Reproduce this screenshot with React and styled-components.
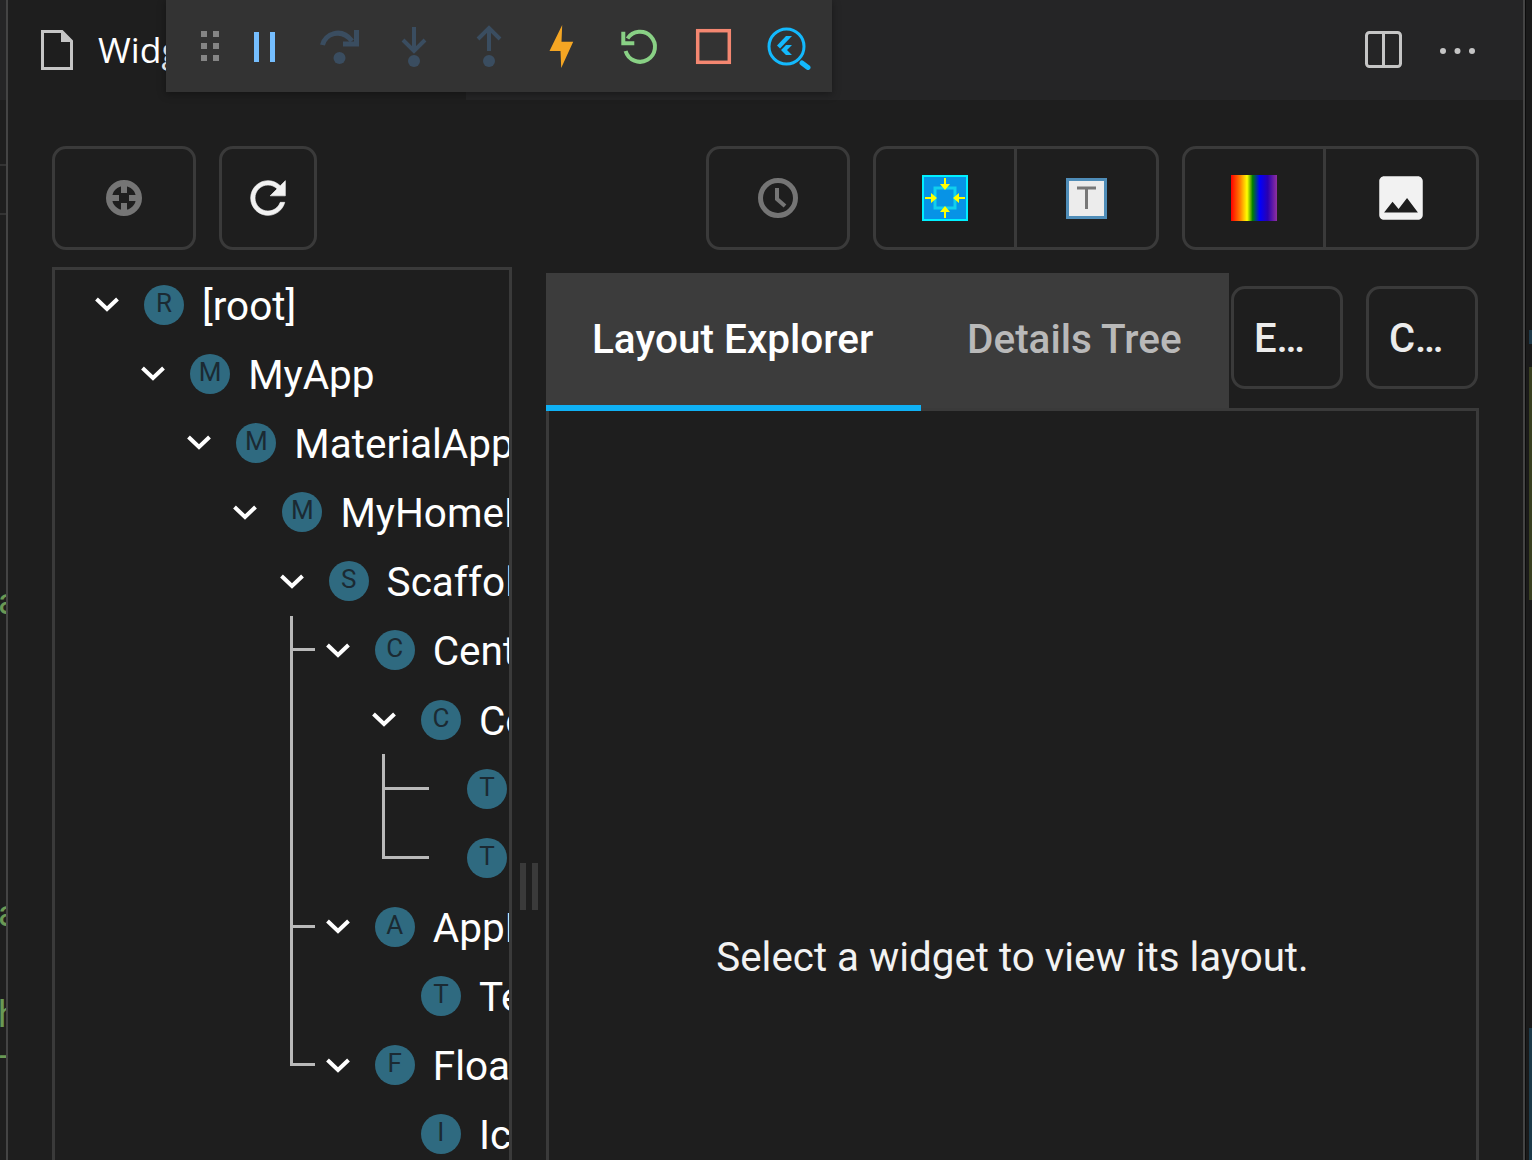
import React from "react"
import styled, { createGlobalStyle } from "styled-components"

const GlobalStyle = createGlobalStyle`
  html, body {
    margin: 0;
    background: #1e1e1e;
  }
`

const Page = styled.div`
  display: flex;
  width: 1532px;
  height: 1160px;
  overflow: hidden;
  background: #1e1e1e;
  font-family: Roboto, "Liberation Sans", sans-serif;
  color: #fff;
`

const Gutter = styled.div`
  flex: none;
  width: 6px;
  border-right: 2px solid #444;
  display: flex;
  flex-direction: column;
  overflow: hidden;
`

const GutterHead = styled.div`
  flex: none;
  height: 100px;
  background: #252526;
`

const GutterRule = styled.div`
  flex: none;
  height: 2px;
  margin-top: ${p => p.$top}px;
  background: #333;
`

const GutterLine = styled.div`
  flex: none;
  margin-top: ${p => p.$top}px;
  margin-left: ${p => p.$shift || 0}px;
  height: 40px;
  font: 36px/40px Roboto, sans-serif;
  color: #6a9955;
  white-space: nowrap;
`

const Main = styled.div`
  flex: none;
  width: 1515px;
  display: flex;
  flex-direction: column;
  position: relative;
`

const RightEdge = styled.div`
  flex: 1;
  border-left: 2px solid #444;
  display: flex;
`

const EdgeShadow = styled.div`
  flex: none;
  width: 1px;
  background: #0c0c0c;
`

const OverviewRuler = styled.div`
  flex: 1;
  padding-top: 330px;
  background: #1a1a1a;
  display: flex;
  flex-direction: column;
  align-items: flex-end;
`

const RulerMark = styled.div`
  flex: none;
  width: 3px;
  height: ${p => p.$height}px;
  margin-top: ${p => p.$top}px;
  background: ${p => p.$color};
`

const Header = styled.div`
  flex: none;
  height: 100px;
  display: flex;
  align-items: stretch;
  background: #252526;
`

const EditorTab = styled.div`
  flex: none;
  width: 425px;
  padding-left: 33px;
  display: flex;
  align-items: center;
  gap: 25px;
  background: #1e1e1e;
  font: 35.5px "Open Sans", sans-serif;
  white-space: nowrap;
`

const TabTitle = styled.span`
  padding-bottom: 2px;
`

const HeaderActions = styled.div`
  flex: 1;
  display: flex;
  align-items: center;
  justify-content: flex-end;
  gap: 37px;
  padding-right: 48px;
`

const DebugBar = styled.div`
  position: absolute;
  top: 0;
  left: 158px;
  width: 666px;
  height: 92px;
  display: flex;
  align-items: center;
  background: #333333;
  box-shadow: 0 2px 8px rgba(0, 0, 0, 0.36);
`

const DragHandle = styled.div`
  flex: none;
  width: 26px;
  padding-left: 35px;
  display: flex;
`

const DebugButton = styled.div`
  flex: none;
  width: 75px;
  display: flex;
  justify-content: center;
`

const Toolbar = styled.div`
  flex: none;
  height: 104px;
  margin-top: 46px;
  padding: 0 44px;
  display: flex;
  gap: 23px;
`

const Spacer = styled.div`
  flex: 1;
`

const ButtonGroup = styled.div`
  flex: none;
  display: flex;
  box-sizing: border-box;
  border: 3px solid #3a3a3a;
  border-radius: 14px;
`

const ToolButton = styled.div`
  flex: none;
  box-sizing: border-box;
  width: ${p => p.$width}px;
  display: flex;
  align-items: center;
  justify-content: center;

  & + & {
    border-left: 3px solid #3a3a3a;
  }
`

const Split = styled.div`
  flex: none;
  height: 1239px;
  margin-top: 17px;
  padding: 0 44px;
  display: flex;
`

const TreePanel = styled.div`
  flex: none;
  box-sizing: border-box;
  width: 460px;
  height: 100%;
  border: 3px solid #3a3a3a;
  overflow: hidden;
`

const Row = styled.div`
  position: relative;
  height: 69.17px;
  padding-left: ${p => 37 + p.$depth * 46.15}px;
  display: flex;
  align-items: center;
  white-space: nowrap;
`

const Chevron = styled.div`
  flex: none;
  width: 30px;
  margin-right: 22px;
  display: flex;
  justify-content: center;
  visibility: ${p => (p.$hidden ? "hidden" : "visible")};
`

const Avatar = styled.div`
  flex: none;
  box-sizing: border-box;
  width: 40px;
  height: 40px;
  margin-right: 18px;
  padding-bottom: 4px;
  border-radius: 50%;
  background: #2f6a80;
  color: #1b2a33;
  font-size: 26px;
  display: flex;
  align-items: center;
  justify-content: center;
`

const Label = styled.span`
  font-size: 40.5px;
  line-height: 50px;
  padding-top: 2px;
`

const GuideStem = styled.div`
  position: absolute;
  left: ${p => p.$left}px;
  top: 0;
  width: 3px;
  height: ${p => (p.$end ? "50%" : "100%")};
  background: #b9b9b9;
`

const GuideArm = styled.div`
  position: absolute;
  left: ${p => p.$left}px;
  top: calc(50% - 2px);
  width: ${p => p.$width}px;
  height: 3px;
  background: #b9b9b9;
`

const Splitter = styled.div`
  flex: none;
  width: 34px;
  display: flex;
  align-items: center;
  justify-content: center;
  gap: 6px;
`

const Grip = styled.div`
  width: 6px;
  height: 47px;
  background: #3a3a3a;
`

const DetailPane = styled.div`
  flex: 1;
  min-width: 0;
  padding-top: 6px;
  display: flex;
  flex-direction: column;
`

const TabRow = styled.div`
  flex: none;
  height: 135px;
  display: flex;
`

const TabStrip = styled.div`
  flex: none;
  width: 683px;
  display: flex;
  align-items: flex-start;
  background: #3c3c3c;
`

const Tab = styled.div`
  position: relative;
  z-index: 1;
  flex: none;
  box-sizing: border-box;
  width: ${p => p.$width}px;
  height: 138px;
  padding-left: 46px;
  padding-top: 42px;
  border-bottom: 6px solid ${p => (p.$active ? "#0fb1f5" : "transparent")};
  color: ${p => (p.$active ? "#fff" : "#b9b9b9")};
  font-size: 40.5px;
  line-height: 48px;
  font-weight: 500;
  white-space: nowrap;
`

const TextButton = styled.div`
  flex: none;
  box-sizing: border-box;
  width: ${p => p.$width}px;
  height: 103px;
  margin-top: 13px;
  margin-left: ${p => p.$gap}px;
  padding-left: 20px;
  padding-top: 2px;
  border: 3px solid #3a3a3a;
  border-radius: 14px;
  display: flex;
  align-items: center;
  color: #ececec;
  font-size: 40px;
  font-weight: 500;
`

const LayoutPanel = styled.div`
  flex: 1;
  border: 3px solid #3a3a3a;
  display: flex;
  align-items: center;
  justify-content: center;
  font-size: 40.3px;
  color: #f2f2f2;
`

const FileSvg = styled.svg`
  flex: none;
`

const SplitSvg = styled.svg`
  margin-bottom: 2px;
`

const MoreSvg = styled.svg`
  margin-top: 2px;
`

const tree = [
  { depth: 0, letter: "R", label: "[root]", open: true },
  { depth: 1, letter: "M", label: "MyApp", open: true },
  { depth: 2, letter: "M", label: "MaterialApp", open: true },
  { depth: 3, letter: "M", label: "MyHomePage", open: true },
  { depth: 4, letter: "S", label: "Scaffold", open: true },
  { depth: 5, letter: "C", label: "Center", open: true, stem: true, arm: 25 },
  { depth: 6, letter: "C", label: "Column", open: true, stem: true },
  { depth: 7, letter: "T", label: "Text", stem: true, stem2: 327, arm2: 47 },
  { depth: 7, letter: "T", label: "Text", stem: true, stem2: 327, arm2: 47, end2: true },
  { depth: 5, letter: "A", label: "AppBar", open: true, stem: true, arm: 25 },
  { depth: 6, letter: "T", label: "Text", stem: true },
  { depth: 5, letter: "F", label: "FloatingActionButton", open: true, stem: true, arm: 25, end: true },
  { depth: 6, letter: "I", label: "Icon" },
]

const Icon48 = ({ children }) => (
  <svg width="48" height="48" viewBox="0 0 48 48" fill="none">{children}</svg>
)

const DragDots = () => (
  <svg width="18" height="30" viewBox="0 0 18 30" fill="#858585">
    <rect x="0" y="0" width="6" height="6" />
    <rect x="12" y="0" width="6" height="6" />
    <rect x="0" y="12" width="6" height="6" />
    <rect x="12" y="12" width="6" height="6" />
    <rect x="0" y="24" width="6" height="6" />
    <rect x="12" y="24" width="6" height="6" />
  </svg>
)

const FileIcon = () => (
  <FileSvg width="32" height="40" viewBox="0 0 32 40" fill="none" stroke="#c5c5c5" strokeWidth="3">
    <path d="M1.5 1.5H21L30.5 11V38.5H1.5Z" />
    <path d="M20 1.5V12H30.5" fill="#c5c5c5" stroke="none" />
  </FileSvg>
)

const SplitIcon = () => (
  <SplitSvg width="37" height="37" viewBox="0 0 37 37" fill="none" stroke="#c5c5c5" strokeWidth="3">
    <rect x="1.5" y="1.5" width="34" height="34" rx="3" />
    <path d="M18.5 1.5V35.5" />
  </SplitSvg>
)

const MoreIcon = () => (
  <MoreSvg width="36" height="8" viewBox="0 0 36 8" fill="#c5c5c5">
    <circle cx="4" cy="4" r="3" />
    <circle cx="18.5" cy="4" r="3" />
    <circle cx="33" cy="4" r="3" />
  </MoreSvg>
)

const StepColor = "#3a4d60"

const debugIcons = [
  <Icon48 key="pause">
    <rect x="13" y="10" width="5" height="30" fill="#75beff" />
    <rect x="29" y="10" width="5" height="30" fill="#75beff" />
  </Icon48>,
  <Icon48 key="over">
    <path d="M6.5 23C9 12 25 5 36 19" stroke={StepColor} strokeWidth="5" />
    <path d="M40.5 8V22H27" stroke={StepColor} strokeWidth="5" />
    <circle cx="23.5" cy="36" r="6" fill={StepColor} />
  </Icon48>,
  <Icon48 key="into">
    <path d="M23 5V27M12 18L23 29L34 18" stroke={StepColor} strokeWidth="4" />
    <circle cx="23" cy="39" r="6" fill={StepColor} />
  </Icon48>,
  <Icon48 key="out">
    <path d="M23 29V7M12 17L23 6L34 17" stroke={StepColor} strokeWidth="4" />
    <circle cx="23" cy="39" r="6" fill={StepColor} />
  </Icon48>,
  <Icon48 key="bolt">
    <path d="M21.2 3L8.5 29H19.5L20.2 46L32.2 19.7H20.5Z" fill="#f5a623" />
  </Icon48>,
  <Icon48 key="restart">
    <path d="M9.6 29A15 15 0 1 0 11.5 16.5" stroke="#89d185" strokeWidth="4" />
    <path d="M7.3 9.7V21.3H18.3" stroke="#89d185" strokeWidth="4" />
  </Icon48>,
  <Icon48 key="stop">
    <rect x="6.7" y="8.7" width="31.6" height="31.6" stroke="#f48771" strokeWidth="3.5" />
  </Icon48>,
  <Icon48 key="inspect">
    <circle cx="20.5" cy="24.5" r="17.5" stroke="#13b9fd" strokeWidth="3" />
    <path d="M36 41L42 45.5" stroke="#13b9fd" strokeWidth="5" strokeLinecap="round" />
    <path d="M26 14H20L11 23.5L14 26.5Z" fill="#13b9fd" />
    <path d="M26 23H20L15 28L20 33H26L21 28Z" fill="#13b9fd" />
  </Icon48>,
]

const Material = ({ d, fill, size = 46, stroke = 0 }) => (
  <svg width={size} height={size} viewBox="0 0 24 24" fill={fill} stroke={fill} strokeWidth={stroke}><path d={d} /></svg>
)

const TargetIcon = () => (
  <svg width="36" height="36" viewBox="0 0 36 36" fill="none" stroke="#757575">
    <circle cx="18" cy="18" r="15" strokeWidth="6" />
    <path d="M18 5V13M18 23V31M5 18H13M23 18H31" strokeWidth="6" />
  </svg>
)

const ClockIcon = () => (
  <svg width="40" height="40" viewBox="0 0 40 40" fill="none" stroke="#757575">
    <circle cx="20" cy="20" r="17.5" strokeWidth="5" />
    <path d="M19 10V21L27 28" strokeWidth="4" />
  </svg>
)

const RefreshPath = "M17.65 6.35C16.2 4.9 14.21 4 12 4c-4.42 0-7.99 3.58-7.99 8s3.57 8 7.99 8c3.73 0 6.84-2.55 7.73-6h-2.08c-.82 2.33-3.04 4-5.65 4-3.31 0-6-2.69-6-6s2.69-6 6-6c1.66 0 3.14.69 4.22 1.78L13 11h7V4l-2.35 2.35z"
const ImagePath = "M21 19V5c0-1.1-.9-2-2-2H5c-1.1 0-2 .9-2 2v14c0 1.1.9 2 2 2h14c1.1 0 2-.9 2-2zM8.5 13.5l2.5 3.01L14.5 12l4.5 6H5l3.5-4.5z"

const RepaintIcon = () => (
  <svg width="46" height="46" viewBox="0 0 46 46">
    <rect x="1" y="1" width="44" height="44" fill="#0793e6" stroke="#00f0ff" strokeWidth="2" />
    <rect x="13" y="13" width="20" height="20" fill="#0793e6" stroke="#11d0ee" strokeWidth="3" />
    <path d="M23 3V11M23 35V43M3 23H11M35 23H43" stroke="#ffff00" strokeWidth="2" />
    <path d="M18 9H28L23 15ZM18 37H28L23 31ZM9 18V28L15 23ZM37 18V28L31 23Z" fill="#ffff00" />
  </svg>
)

const TextBoxIcon = () => (
  <svg width="41" height="41" viewBox="0 0 41 41">
    <rect x="1.5" y="1.5" width="38" height="38" fill="#ececec" stroke="#4f8db8" strokeWidth="3" />
    <path d="M11 10H30M20.5 10V31" stroke="#777" strokeWidth="3" fill="none" />
  </svg>
)

const RainbowIcon = () => (
  <svg width="46" height="46" viewBox="0 0 46 46">
    <defs>
      <linearGradient id="rainbow">
        <stop offset="0" stopColor="#ff0000" />
        <stop offset="0.2" stopColor="#ff8000" />
        <stop offset="0.35" stopColor="#ffff00" />
        <stop offset="0.47" stopColor="#008000" />
        <stop offset="0.62" stopColor="#0000ff" />
        <stop offset="0.8" stopColor="#2a00b0" />
        <stop offset="1" stopColor="#9030a0" />
      </linearGradient>
    </defs>
    <rect width="46" height="46" fill="url(#rainbow)" />
  </svg>
)

const ChevronIcon = () => (
  <svg width="24" height="15" viewBox="0 0 24 15" fill="none" stroke="#fff" strokeWidth="4">
    <path d="M1.5 2L12 12L22.5 2" />
  </svg>
)

export default function App() {
  return (
    <>
      <GlobalStyle />
      <Page>
        <Gutter>
          <GutterHead />
          <GutterRule $top={64} />
          <GutterRule $top={47} />
          <GutterLine $top={367} $shift={-2}>a</GutterLine>
          <GutterLine $top={272} $shift={-2}>a</GutterLine>
          <GutterLine $top={61} $shift={-2}>h</GutterLine>
          <GutterLine $top={3} $shift={-3}>–</GutterLine>
        </Gutter>
        <Main>
          <Header>
            <EditorTab>
              <FileIcon />
              <TabTitle>Widget Inspector</TabTitle>
            </EditorTab>
            <HeaderActions>
              <SplitIcon />
              <MoreIcon />
            </HeaderActions>
          </Header>
          <DebugBar>
            <DragHandle><DragDots /></DragHandle>
            {debugIcons.map(icon => (
              <DebugButton key={icon.key}>{icon}</DebugButton>
            ))}
          </DebugBar>
          <Toolbar>
            <ButtonGroup>
              <ToolButton $width={138}><TargetIcon /></ToolButton>
            </ButtonGroup>
            <ButtonGroup>
              <ToolButton $width={92}><Material d={RefreshPath} fill="#f2f2f2" size={52} stroke={0.3} /></ToolButton>
            </ButtonGroup>
            <Spacer />
            <ButtonGroup>
              <ToolButton $width={138}><ClockIcon /></ToolButton>
            </ButtonGroup>
            <ButtonGroup>
              <ToolButton $width={138}><RepaintIcon /></ToolButton>
              <ToolButton $width={142}><TextBoxIcon /></ToolButton>
            </ButtonGroup>
            <ButtonGroup>
              <ToolButton $width={138}><RainbowIcon /></ToolButton>
              <ToolButton $width={153}><Material d={ImagePath} fill="#f2f2f2" size={58} /></ToolButton>
            </ButtonGroup>
          </Toolbar>
          <Split>
            <TreePanel>
              {tree.map((node, i) => (
                <Row key={i} $depth={node.depth}>
                  {node.stem && <GuideStem $left={235} $end={node.end} />}
                  {node.arm && <GuideArm $left={235} $width={node.arm} />}
                  {node.stem2 && <GuideStem $left={node.stem2} $end={node.end2} />}
                  {node.arm2 && <GuideArm $left={node.stem2} $width={node.arm2} />}
                  <Chevron $hidden={!node.open}><ChevronIcon /></Chevron>
                  <Avatar>{node.letter}</Avatar>
                  <Label>{node.label}</Label>
                </Row>
              ))}
            </TreePanel>
            <Splitter>
              <Grip />
              <Grip />
            </Splitter>
            <DetailPane>
              <TabRow>
                <TabStrip>
                  <Tab $active $width={375}>Layout Explorer</Tab>
                  <Tab $width={308}>Details Tree</Tab>
                </TabStrip>
                <TextButton $width={112} $gap={2}>E…</TextButton>
                <TextButton $width={112} $gap={23}>C…</TextButton>
              </TabRow>
              <LayoutPanel>Select a widget to view its layout.</LayoutPanel>
            </DetailPane>
          </Split>
        </Main>
        <RightEdge>
          <EdgeShadow />
          <OverviewRuler>
            <RulerMark $top={0} $height={14} $color="#1f3a4a" />
            <RulerMark $top={23} $height={233} $color="#3a4020" />
            <RulerMark $top={428} $height={132} $color="#1c3a4a" />
          </OverviewRuler>
        </RightEdge>
      </Page>
    </>
  )
}
